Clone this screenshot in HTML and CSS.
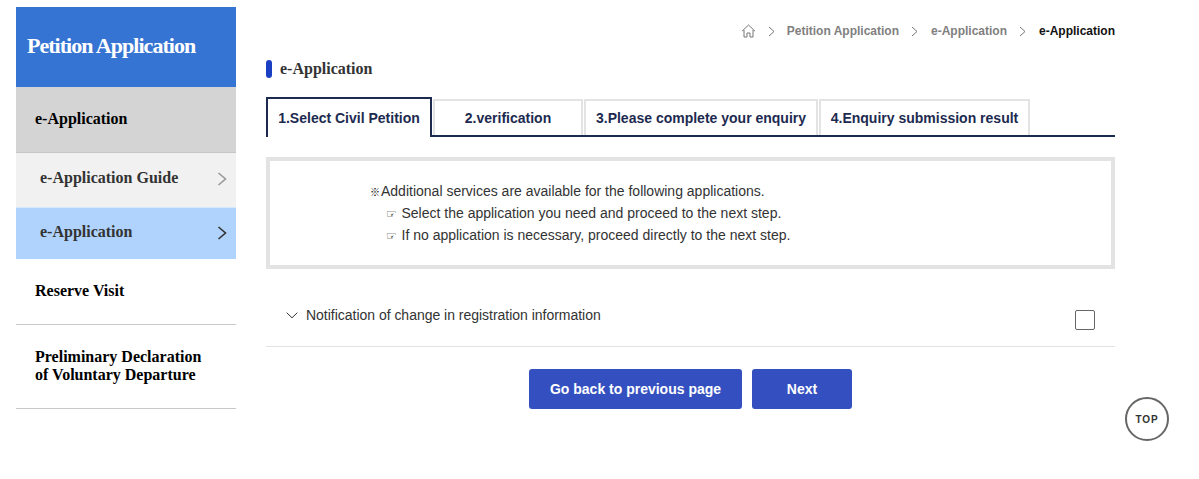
FILE: index.html
```html
<!DOCTYPE html>
<html lang="en">
<head>
<meta charset="utf-8">
<title>e-Application</title>
<link rel="stylesheet" href="styles.css">
</head>
<body>
<div class="page">
  <aside class="side">
    <h2 class="side-title">Petition Application</h2>
    <div class="side-active">e-Application</div>
    <a class="sub sub-guide">e-Application Guide
      <svg class="chev" width="10" height="16" viewBox="0 0 10 16"><path d="M1.5 2l7 6-7 6" fill="none" stroke="#999" stroke-width="1.6"/></svg>
    </a>
    <a class="sub sub-on">e-Application
      <svg class="chev" width="10" height="16" viewBox="0 0 10 16"><path d="M1.5 2l7 6-7 6" fill="none" stroke="#333" stroke-width="1.6"/></svg>
    </a>
    <div class="side-item side-reserve">Reserve Visit</div>
    <div class="side-item side-prelim">Preliminary Declaration<br>of Voluntary Departure</div>
  </aside>
  <main class="main">
    <nav class="crumbs">
      <svg class="home" width="15" height="14" viewBox="0 0 15 14"><path d="M1 7.2L7.5 1 14 7.2M3 6v7h3V9h3v4h3V6" fill="none" stroke="#777" stroke-width="1"/></svg>
      <svg class="sep" width="7" height="11" viewBox="0 0 7 11"><path d="M1 1l5 4.5L1 10" fill="none" stroke="#777" stroke-width="1"/></svg>
      <span>Petition Application</span>
      <svg class="sep" width="7" height="11" viewBox="0 0 7 11"><path d="M1 1l5 4.5L1 10" fill="none" stroke="#777" stroke-width="1"/></svg>
      <span>e-Application</span>
      <svg class="sep" width="7" height="11" viewBox="0 0 7 11"><path d="M1 1l5 4.5L1 10" fill="none" stroke="#777" stroke-width="1"/></svg>
      <span class="here">e-Application</span>
    </nav>
    <h1 class="title"><i class="mark"></i>e-Application</h1>
    <div class="tabs">
      <div class="tab tab-1 on">1.Select Civil Petition</div>
      <div class="tab tab-2">2.verification</div>
      <div class="tab tab-3">3.Please complete your enquiry</div>
      <div class="tab tab-4">4.Enquiry submission result</div>
    </div>
    <div class="notice">
      <p class="l1"><span class="sym">※</span>Additional services are available for the following applications.</p>
      <p class="l2"><span class="sym">☞</span>Select the application you need and proceed to the next step.</p>
      <p class="l2"><span class="sym">☞</span>If no application is necessary, proceed directly to the next step.</p>
    </div>
    <div class="row">
      <svg class="down" width="12" height="7" viewBox="0 0 12 7"><path d="M.7.7L6 5.8 11.3.7" fill="none" stroke="#333" stroke-width="1"/></svg>
      <span class="row-text">Notification of change in registration information</span>
      <span class="check"></span>
    </div>
    <div class="btns">
      <a class="btn btn-back">Go back to previous page</a>
      <a class="btn btn-next">Next</a>
    </div>
  </main>
</div>
<a class="top">TOP</a>
</body>
</html>
```
FILE: styles.css
```css
* { box-sizing: border-box; }
html, body { margin: 0; padding: 0; background: #fff; }
body { font-family: "Liberation Sans", Arial, sans-serif; height: 479px; overflow: hidden; }
.page { display: flex; align-items: flex-start; padding: 7px 0 0 16px; }

.side { width: 220px; flex: none; font-family: "Liberation Serif", "Times New Roman", serif; font-weight: bold; }
.side-title { margin: 0; height: 80px; background: #3674d3; color: #fff; font-size: 22px; line-height: 78px; padding-left: 11px; letter-spacing: -0.97px; font-weight: bold; }
.side-active { height: 66px; background: #d4d4d4; border-bottom: 1px solid #c6c6c6; color: #000; font-size: 16px; line-height: 63px; padding-left: 19px; }
.sub { display: flex; align-items: center; justify-content: space-between; font-size: 16px; color: #333; padding: 0 9px 0 24px; }
.sub-guide { height: 54px; background: #f1f1f1; padding-bottom: 5px; }
.sub-guide .chev { margin-top: 3px; }
.sub-on { height: 52px; background: #b0d3fd; border-top: 1px solid #d8e8fb; padding-bottom: 3px; }
.sub-on .chev { margin-top: 1px; }
.side-item { border-bottom: 1px solid #c8c8c8; color: #000; font-size: 16px; line-height: 18px; padding-left: 19px; }
.side-reserve { height: 66px; padding-top: 23px; }
.side-prelim { height: 84px; padding-top: 23px; }

.main { width: 849px; margin-left: 30px; flex: none; }
.crumbs { display: flex; justify-content: flex-end; align-items: center; height: 16px; margin-top: 16px; font-size: 12px; font-weight: bold; color: #808080; }
.crumbs .home { margin-right: 12px; }
.crumbs .sep { margin: 0 12.5px; }
.crumbs .home + .sep { margin: 0 12px 0 0; }
.crumbs .here { color: #111; }
.title { display: flex; align-items: center; margin: 21px 0 0; height: 18px; font-family: "Liberation Serif", "Times New Roman", serif; font-size: 16px; font-weight: bold; color: #333; }
.mark { width: 6px; height: 18px; border-radius: 3px; background: #1a3fc2; margin-right: 8px; }
.tabs { display: flex; height: 40px; margin-top: 19px; border-bottom: 2px solid #1d2a50; font-size: 14px; font-weight: bold; color: #1d2a50; }
.tab { height: 36px; margin-top: 2px; background: #fff; border: 2px solid #e3e3e3; border-bottom: 0; line-height: 34px; text-align: center; white-space: nowrap; }
.tab.on { height: 40px; margin-top: 0; border: 2px solid #1d2a50; border-bottom: 0; line-height: 38px; margin-right: 1px; }
.tab-1 { width: 166px; }
.tab-2 { width: 150px; margin-right: 1px; }
.tab-3 { width: 234px; margin-right: 1px; }
.tab-4 { width: 211px; }
.notice { height: 112px; margin-top: 20px; border: 4px solid #e3e3e3; padding: 19px 0 0 100px; font-size: 14px; line-height: 22px; color: #333; }
.notice p { margin: 0; height: 22px; }
.sym { display: inline-block; line-height: 1; color: #000; }
.l1 .sym { width: 11px; font-family: "Noto Sans CJK KR", sans-serif; font-size: 10px; font-weight: bold; }
.l2 { padding-left: 16px; }
.l2 .sym { width: 15.5px; font-family: "DejaVu Sans", sans-serif; font-size: 12px; font-weight: bold; }
.row { display: flex; align-items: flex-start; height: 78px; border-bottom: 1px solid #e3e3e3; font-size: 14px; color: #333; padding: 38px 20px 0 20px; }
.down { margin-top: 5px; margin-right: 8px; }
.row-text { flex: 1; line-height: 17px; letter-spacing: -0.02px; }
.check { width: 20px; height: 20px; margin-top: 3px; border: 1px solid #666; border-radius: 2px; background: #fff; }
.btns { display: flex; justify-content: center; gap: 10px; margin-top: 22px; }
.btn { height: 40px; border-radius: 3px; background: #3450c0; color: #fff; font-size: 14px; font-weight: bold; line-height: 40px; text-align: center; }
.btn-back { width: 213px; }
.btn-next { width: 100px; }
.top { position: fixed; left: 1125px; top: 397px; width: 44px; height: 44px; border: 2px solid #666; border-radius: 50%; background: #fff; color: #333; font-size: 10px; font-weight: bold; letter-spacing: 0.8px; line-height: 41px; text-align: center; }
```
